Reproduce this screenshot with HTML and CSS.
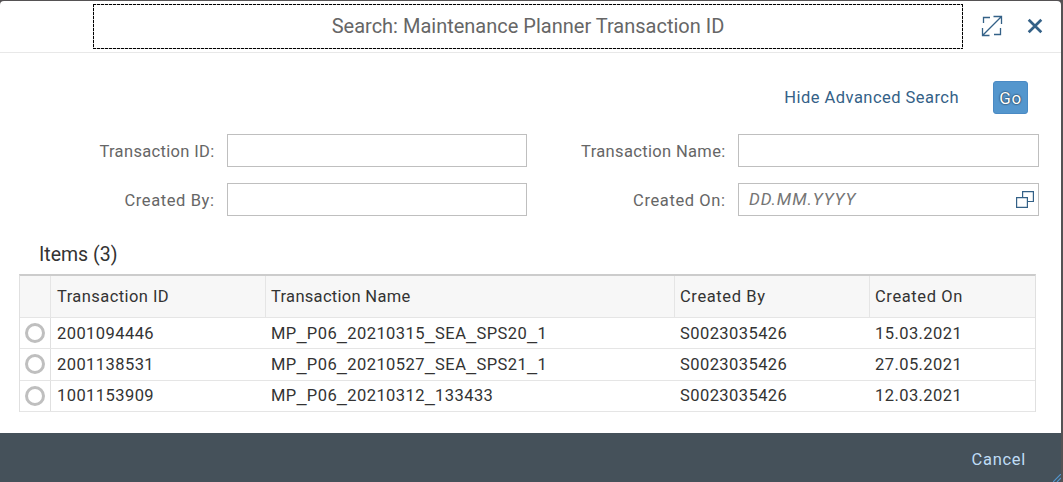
FILE: index.html
```html
<!DOCTYPE html>
<html lang="en">
<head>
<meta charset="utf-8">
<title>Search: Maintenance Planner Transaction ID</title>
<link rel="stylesheet" href="styles.css">
</head>
<body>
<div class="dialog">
  <header class="header">
    <h1 class="title">Search: Maintenance Planner Transaction ID</h1>
    <button class="icon-btn" aria-label="Maximize">
      <svg width="22" height="22" viewBox="0 0 22 22" fill="none" stroke="#346187" stroke-width="1.3"><path d="M2.5 8V2.5H9M12.5 1.5H20.5V9M20.5 1.5L1.5 20.5M1.5 13V20.5H8.5M19.5 13V19.5H13"/></svg>
    </button>
    <button class="icon-btn close" aria-label="Close">
      <svg width="16" height="16" viewBox="0 0 16 16" fill="none" stroke="#346187" stroke-width="2.7"><path d="M1.7 1.7L14.3 14.3M14.3 1.7L1.7 14.3"/></svg>
    </button>
  </header>
  <main class="body">
    <div class="toolbar">
      <a class="link">Hide Advanced Search</a>
      <button class="go">Go</button>
    </div>
    <form class="filters">
      <label>Transaction ID:</label><div class="field"></div>
      <label>Transaction Name:</label><div class="field"></div>
      <label class="wide">Created By:</label><div class="field"></div>
      <label class="wide">Created On:</label>
      <div class="field date"><span class="placeholder">DD.MM.YYYY</span>
        <svg width="18" height="17" viewBox="0 0 18 17" fill="none" stroke="#346187" stroke-width="1.2"><path d="M.6 6.6H11.4V16.4H.6ZM6.6 6.5V.6H17.4V10.5H11.5"/></svg>
      </div>
    </form>
    <h2 class="items">Items (3)</h2>
    <div class="table">
      <div class="row head"><div class="cell sel"></div><div class="cell">Transaction ID</div><div class="cell name">Transaction Name</div><div class="cell wide">Created By</div><div class="cell wide">Created On</div></div>
      <div class="row first"><div class="cell sel"><i class="radio"></i></div><div class="cell">2001094446</div><div class="cell"><span>MP<u>_</u>P06<u>_</u>20210315<u>_</u>SEA<u>_</u>SPS20<u>_</u>1</span></div><div class="cell">S0023035426</div><div class="cell">15.03.2021</div></div>
      <div class="row tall"><div class="cell sel"><i class="radio"></i></div><div class="cell">2001138531</div><div class="cell"><span>MP<u>_</u>P06<u>_</u>20210527<u>_</u>SEA<u>_</u>SPS21<u>_</u>1</span></div><div class="cell">S0023035426</div><div class="cell">27.05.2021</div></div>
      <div class="row"><div class="cell sel"><i class="radio"></i></div><div class="cell">1001153909</div><div class="cell"><span>MP<u>_</u>P06<u>_</u>20210312<u>_</u>133433</span></div><div class="cell">S0023035426</div><div class="cell">12.03.2021</div></div>
    </div>
  </main>
  <footer class="footer"><button class="cancel">Cancel</button>
    <svg class="grip" width="8" height="8" viewBox="0 0 8 8" stroke="#5496cd" stroke-width="1.2"><path d="M0 8L8 0M4 8L8 4"/></svg>
  </footer>
</div>
</body>
</html>
```
FILE: styles.css
```css
* { box-sizing: border-box; }
body {
  margin: 0;
  padding: 1px 2px 0 0;
  height: 482px;
  overflow: hidden;
  background: #555254;
  font: 16.5px/20px Roboto, "Noto Sans", sans-serif;
  color: #333;
}
button { border: 0; padding: 0; background: none; font: inherit; }
h1, h2 { margin: 0; font-weight: 400; }
.dialog {
  height: 481px;
  display: flex;
  flex-direction: column;
  background: #fff;
  border-radius: 4px 4px 0 0;
}
.header {
  height: 52px;
  flex: none;
  display: flex;
  align-items: flex-start;
  padding: 3px 0 0 93px;
  border-bottom: 1px solid #e8e8e8;
}
.title {
  --dash: #000 0 3px, #ccc 3px 4px;
  width: 870px;
  height: 45px;
  padding-bottom: 2px;
  background:
    repeating-linear-gradient(90deg, var(--dash)) top / 100% 1px no-repeat,
    repeating-linear-gradient(90deg, var(--dash)) bottom / 100% 1px no-repeat,
    repeating-linear-gradient(var(--dash)) left / 1px 100% no-repeat,
    repeating-linear-gradient(var(--dash)) right / 1px 100% no-repeat;
  display: flex;
  align-items: center;
  justify-content: center;
  font-size: 20px;
  color: #666;
}
.icon-btn { margin: 11px 0 0 18px; height: 22px; display: flex; align-items: center; }
.close { margin-left: 24px; }
.body { flex: 1; padding-top: 28px; }
.toolbar {
  display: flex;
  justify-content: flex-end;
  align-items: center;
  gap: 34px;
  padding-right: 33px;
  height: 33px;
}
.link { color: #346187; letter-spacing: .46px; }
.go {
  width: 35px;
  height: 33px;
  border: 1px solid #4a8ac4;
  border-radius: 3px;
  background: #5496cd;
  color: #fff;
  font-size: 17px;
  letter-spacing: .6px;
  text-shadow: 0 0 2px #000;
}
.filters {
  display: grid;
  grid-template-columns: 214px 313px 198px 314px;
  grid-template-rows: 33px 33px;
  row-gap: 16px;
  margin-top: 20px;
  align-items: center;
}
.filters label { text-align: right; color: #666; padding-top: 3px; margin-right: -.6px; letter-spacing: .34px; }
.filters .wide, .head .wide { letter-spacing: .6px; }
.field { height: 33px; margin-left: 13px; border: 1px solid #bfbfbf; background: #fff; }
.date { display: flex; align-items: center; justify-content: space-between; padding: 0 4px 0 10px; }
.placeholder { padding-bottom: 2px; font-size: 17px; font-style: italic; color: #757575; letter-spacing: .9px; }
.items { margin: 29px 0 0 39px; height: 20px; font-size: 19.5px; }
.table {
  margin: 9px 0 0 19px;
  width: 1017px;
  border: 1px solid #e0e0e0;
  border-top: 2px solid #ccc;
  border-bottom: 0;
}
.row {
  display: grid;
  grid-template-columns: 31px 215px 409px 195px 1fr;
  height: 31px;
  border-bottom: 1px solid #e5e5e5;
}
.row.tall { height: 32px; }
.cell { display: flex; align-items: center; padding-left: 5px; white-space: nowrap; letter-spacing: .43px; }
.cell:nth-child(2) { padding-left: 6px; }
.first .cell:not(.sel) { padding-top: 1px; }
.tall .sel { padding-bottom: 1px; }
.sel { border-right: 1px solid #e0e0e0; }
.head { height: 42px; background: #f7f7f7; }
.head .cell { border-right: 1px solid #e5e5e5; }
.head .cell:last-child { border-right: 0; }
.head .name { letter-spacing: .3px; }
.cell u { text-decoration: none; font: 17.5px/0 "Liberation Sans", Arial, sans-serif; }
.radio { width: 20px; height: 20px; border: 3px solid #bfbfbf; border-radius: 50%; }
.footer {
  position: relative;
  height: 49px;
  flex: none;
  display: flex;
  align-items: center;
  justify-content: flex-end;
  padding: 4px 35px 0 0;
  background: #45515a;
}
.cancel { color: #bfdcf5; letter-spacing: .7px; }
.grip { position: absolute; right: 0; bottom: 0; }
```
